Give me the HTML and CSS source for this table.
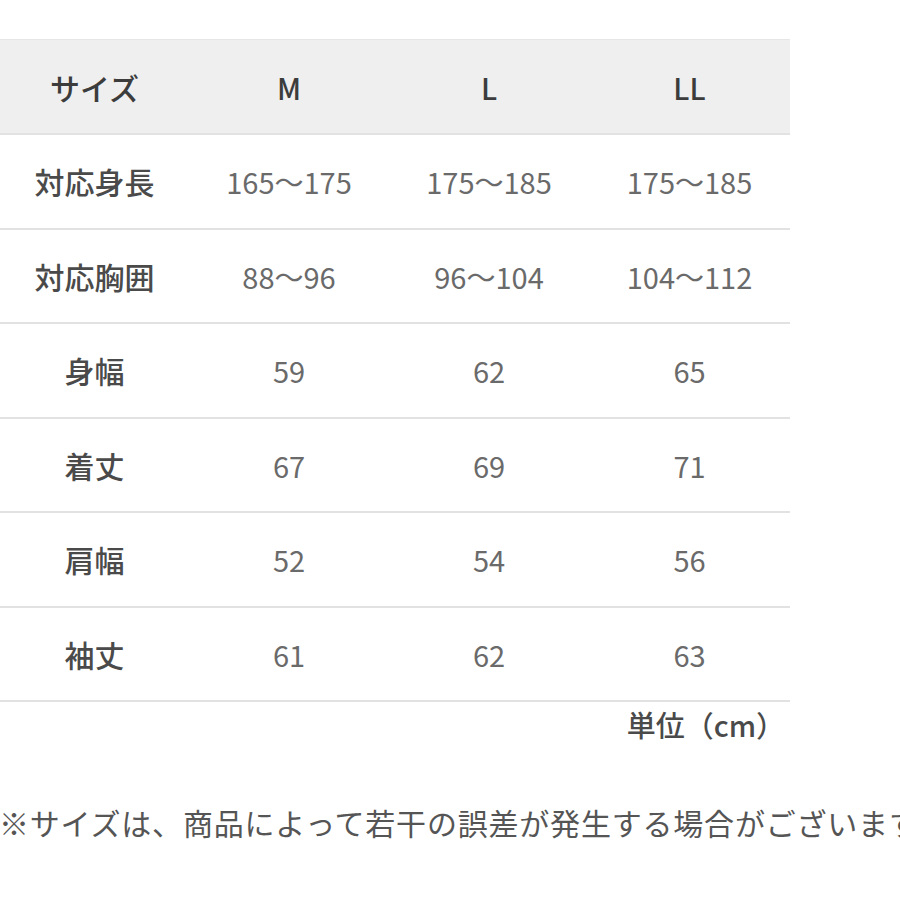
FILE: index.html
```html
<!DOCTYPE html>
<html lang="ja">
<head>
<meta charset="utf-8">
<link rel="stylesheet" href="styles.css">
</head>
<body>
<div class="page">
  <div class="table">
    <div class="row head">
      <div class="cell label">サイズ</div>
      <div class="cell">M</div>
      <div class="cell">L</div>
      <div class="cell">LL</div>
    </div>
    <div class="row">
      <div class="cell label">対応身長</div>
      <div class="cell">165〜175</div>
      <div class="cell">175〜185</div>
      <div class="cell">175〜185</div>
    </div>
    <div class="row">
      <div class="cell label">対応胸囲</div>
      <div class="cell">88〜96</div>
      <div class="cell">96〜104</div>
      <div class="cell">104〜112</div>
    </div>
    <div class="row">
      <div class="cell label">身幅</div>
      <div class="cell">59</div>
      <div class="cell">62</div>
      <div class="cell">65</div>
    </div>
    <div class="row">
      <div class="cell label">着丈</div>
      <div class="cell">67</div>
      <div class="cell">69</div>
      <div class="cell">71</div>
    </div>
    <div class="row">
      <div class="cell label">肩幅</div>
      <div class="cell">52</div>
      <div class="cell">54</div>
      <div class="cell">56</div>
    </div>
    <div class="row">
      <div class="cell label">袖丈</div>
      <div class="cell">61</div>
      <div class="cell">62</div>
      <div class="cell">63</div>
    </div>
  </div>
  <div class="unit">単位（cm）</div>
  <p class="note">※サイズは、商品によって若干の誤差が発生する場合がございます。</p>
</div>
</body>
</html>
```

FILE: styles.css
```css
html, body {
  margin: 0;
  padding: 0;
  background: #ffffff;
  overflow: hidden;
}
.page {
  width: 900px;
  height: 900px;
  padding-top: 39px;
  box-sizing: border-box;
  font-family: "Noto Sans CJK JP", "Noto Sans", sans-serif;
  overflow: hidden;
}
.table {
  width: 790px;
}
.row {
  display: grid;
  grid-template-columns: 189px 200px 200px 201px;
  height: 94.5px;
  border-bottom: 2px solid #e2e2e2;
  box-sizing: border-box;
}
.row.head {
  background: #efefef;
  border-top: 1px solid #e6e6e6;
  height: 96px;
}
.cell {
  display: flex;
  align-items: center;
  justify-content: center;
  font-size: 29px;
  color: #6a6a6a;
  letter-spacing: 0;
}
.cell.label {
  color: #4a4a4a;
  font-weight: 500;
  font-size: 30px;
}
.head .cell {
  color: #3c3c3c;
  font-weight: 500;
  font-size: 29px;
}
.head .cell.label {
  font-size: 30px;
}
.unit {
  width: 785px;
  text-align: right;
  font-size: 29px;
  font-weight: 500;
  color: #4a4a4a;
  margin-top: 2px;
  line-height: 40px;
}
.note {
  margin: 58px 0 0 -1px;
  white-space: nowrap;
  font-size: 30px;
  letter-spacing: 0.8px;
  line-height: 40px;
  color: #555555;
}
```
